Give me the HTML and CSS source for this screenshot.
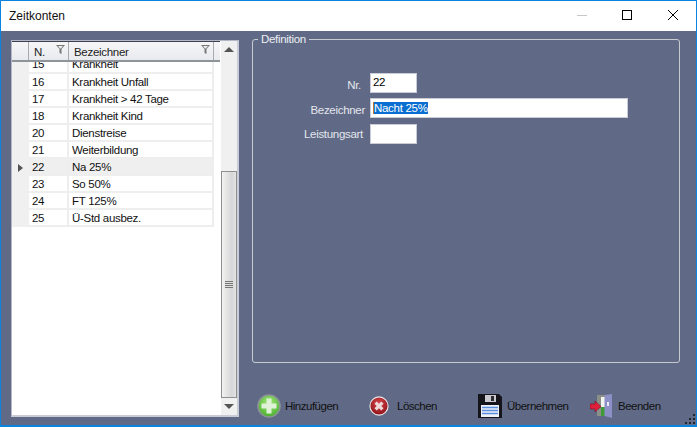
FILE: index.html
```html
<!DOCTYPE html>
<html lang="de">
<head>
<meta charset="utf-8">
<title>Zeitkonten</title>
<link rel="stylesheet" href="styles.css">
</head>
<body>
<div class="window">
  <header class="titlebar">
    <span class="title">Zeitkonten</span>
    <div class="controls">
      <svg class="ctl" width="46" height="30" viewBox="0 0 46 30"><path d="M19 14.500h10" stroke="#c8c8c8" fill="none"/></svg>
      <svg class="ctl" width="46" height="30" viewBox="0 0 46 30"><rect x="18.500" y="9.500" width="9" height="9" stroke="#000" fill="none"/></svg>
      <svg class="ctl" width="46" height="30" viewBox="0 0 46 30"><path d="M18 9l10 10M28 9l-10 10" stroke="#000" fill="none"/></svg>
    </div>
  </header>
  <div class="content">
    <section class="gridbox">
      <div class="grid">
        <div class="ghead">
          <div class="hc hc-ind"></div>
          <div class="hc hc-nr"><span>N.</span><svg class="filter" width="9" height="9" viewBox="0 0 9 9"><path d="M0 0h9L5.500 4v5L3.500 8V4z" fill="#777"/><path d="M2 1h5L4.800 3.500H4z" fill="#eee"/></svg></div>
          <div class="hc hc-name"><span>Bezeichner</span><svg class="filter" width="9" height="9" viewBox="0 0 9 9"><path d="M0 0h9L5.500 4v5L3.500 8V4z" fill="#777"/><path d="M2 1h5L4.800 3.500H4z" fill="#eee"/></svg></div>
        </div>
        <div class="gbody">
          <div class="row cut"><i></i><b>15</b><em>Krankheit</em></div>
          <div class="row"><i></i><b>16</b><em>Krankheit Unfall</em></div>
          <div class="row"><i></i><b>17</b><em>Krankheit &gt; 42 Tage</em></div>
          <div class="row"><i></i><b>18</b><em>Krankheit Kind</em></div>
          <div class="row"><i></i><b>20</b><em>Dienstreise</em></div>
          <div class="row"><i></i><b>21</b><em>Weiterbildung</em></div>
          <div class="row sel"><i><span class="arrow"></span></i><b>22</b><em>Na 25%</em></div>
          <div class="row"><i></i><b>23</b><em>So 50%</em></div>
          <div class="row"><i></i><b>24</b><em>FT 125%</em></div>
          <div class="row"><i></i><b>25</b><em>Ü-Std ausbez.</em></div>
        </div>
      </div>
      <div class="scroll">
        <div class="sbtn"><span class="up"></span></div>
        <div class="track">
          <div class="thumb"><span class="grip"></span></div>
        </div>
        <div class="sbtn"><span class="down"></span></div>
      </div>
    </section>
    <div class="right">
      <fieldset class="group">
        <legend>Definition</legend>
        <div class="form">
          <label class="flabel lb1">Nr.</label><div class="inp short">22</div>
          <label class="flabel lb2">Bezeichner</label><div class="inp long"><span class="hl">Nacht 25%</span></div>
          <label class="flabel lb3">Leistungsart</label><div class="inp short"></div>
        </div>
      </fieldset>
      <div class="actions">
        <div class="act a1">
          <svg width="24" height="24" viewBox="0 0 24 24"><defs><radialGradient id="g" cx="50%" cy="35%" r="65%"><stop offset="0" stop-color="#a5ea7c"/><stop offset="1" stop-color="#48ae2c"/></radialGradient></defs><circle cx="12" cy="12" r="11" fill="url(#g)" stroke="#8d9497" stroke-width="1.500"/><path d="M9.500 4.500h5v5h5v5h-5v5h-5v-5h-5v-5h5z" fill="#dff2d8"/></svg>
          <span>Hinzufügen</span>
        </div>
        <div class="act a2">
          <svg width="20" height="20" viewBox="0 0 22 22"><defs><radialGradient id="r" cx="50%" cy="35%" r="65%"><stop offset="0" stop-color="#d8454a"/><stop offset="1" stop-color="#8d1218"/></radialGradient></defs><circle cx="11" cy="11" r="10" fill="url(#r)" stroke="#e8e4e8" stroke-width="1.200"/><path d="M6 8.500L8.500 6 11 8.500 13.500 6 16 8.500 13.500 11 16 13.500 13.500 16 11 13.500 8.500 16 6 13.500 8.500 11z" fill="#eed8da"/></svg>
          <span>Löschen</span>
        </div>
        <div class="act a3">
          <svg width="24" height="24" viewBox="0 0 24 24"><path d="M0 0h21l3 3v21H0z" fill="#14141a"/><rect x="7" y="1" width="11" height="7" fill="#c9c9cf"/><rect x="13" y="2" width="3" height="5" fill="#2a2a30"/><rect x="3" y="11" width="18" height="12" fill="#eef1fa"/><path d="M4 13.500h16M4 16.500h16M4 19.500h16" stroke="#5b8fdc" stroke-width="1.500"/></svg>
          <span>Übernehmen</span>
        </div>
        <div class="act a4">
          <svg width="22" height="24" viewBox="0 0 22 24"><path d="M7 1h14v21H7z" fill="#8a8f88"/><path d="M11 3h4v10h-4z" fill="#f2f4f2"/><path d="M11 13h4v9h-4z" fill="#3f9a3a"/><path d="M14.500 1L22 0v24l-7.500-2z" fill="#8d90c6"/><path d="M17 8h2v4h-2z" fill="#e8e8f5"/><path d="M0 10h5V7l6 5.500L5 18v-3H0z" fill="#e01f3d" stroke="#7a1020" stroke-width=".6"/></svg>
          <span>Beenden</span>
        </div>
      </div>
    </div>
    <svg class="sizegrip" width="12" height="12" viewBox="0 0 12 12"><path d="M9 1h2v2H9zM5 5h2v2H5zM9 5h2v2H9zM1 9h2v2H1zM5 9h2v2H5zM9 9h2v2H9z" fill="#20242e"/></svg>
  </div>
</div>
</body>
</html>
```
FILE: styles.css
```css
* { box-sizing: border-box; }
html, body { margin: 0; padding: 0; }
body { width: 697px; height: 427px; overflow: hidden; font: 11.5px "Liberation Sans", Arial, sans-serif; letter-spacing: -0.3px; color: #000; }
.window { width: 697px; height: 427px; border: 1px solid #0a84e0; border-bottom-width: 2px; display: flex; flex-direction: column; background: #606a86; }
.titlebar { height: 30px; flex: none; background: #fff; display: flex; justify-content: space-between; padding-left: 8px; }
.title { font-size: 12px; letter-spacing: 0; color: #111; line-height: 30px; }
.controls { display: flex; }
.ctl { display: block; }
.content { flex: 1; display: flex; padding: 9px 0 0 10px; position: relative; min-height: 0; }
.gridbox { width: 228px; height: 377px; flex: none; background: #fff; border: 1px solid #b4b8c6; border-right: 2px solid #c9ccd6; border-bottom: 2px solid #c9ccd6; display: flex; }
.grid { width: 209px; flex: none; display: flex; flex-direction: column; }
.ghead { height: 21px; display: flex; background: linear-gradient(#f6f6f8, #e9eaee); border-top: 1px solid #3e4250; border-bottom: 2px solid #8f939a; flex: none; width: 208px; }
.hc { display: flex; justify-content: space-between; border-right: 1px solid #a9abb0; color: #222; }
.hc span { line-height: 20px; }
.hc-ind { width: 17px; }
.hc-nr { width: 40px; padding: 0 3px 0 5px; }
.hc-name { width: 145px; padding: 0 3px 0 5px; }
.filter { margin-top: 3px; }
.gbody { flex: 1; overflow: hidden; }
.row { height: 17px; display: flex; line-height: 17px; color: #111; }
.row.cut { height: 12px; line-height: 5px; overflow: hidden; }
.row i { width: 17px; flex: none; background: #f0f0f0; display: flex; align-items: center; padding-left: 6px; }
.row b, .row em { font-weight: normal; font-style: normal; padding-left: 3px; border-right: 2px solid #eee; border-bottom: 2px solid #eee; }
.row b { width: 40px; }
.row em { width: 145px; }
.row.sel b, .row.sel em { background: #efefef; }
.arrow { width: 0; height: 0; border-left: 5px solid #555; border-top: 4.500px solid transparent; border-bottom: 4.500px solid transparent; }
.scroll { width: 16px; flex: none; display: flex; flex-direction: column; background: #f0f0f0; }
.sbtn { height: 17px; flex: none; display: flex; align-items: center; justify-content: center; }
.up { width: 0; height: 0; border-left: 5px solid transparent; border-right: 5px solid transparent; border-bottom: 5px solid #555; }
.down { width: 0; height: 0; border-left: 5px solid transparent; border-right: 5px solid transparent; border-top: 5px solid #555; }
.track { flex: 1; display: flex; flex-direction: column; justify-content: flex-end; }
.thumb { height: 227px; border: 1px solid #8f8f8f; background: linear-gradient(90deg, #f2f2f2, #d6d6d8 70%, #e4e4e4); display: flex; align-items: center; justify-content: center; }
.grip { width: 8px; height: 7px; background: repeating-linear-gradient(#777 0 1px, #ddd 1px 2px); }
.right { flex: 1; margin-left: 13px; padding-right: 16px; display: flex; flex-direction: column; min-width: 0; }
.group { height: 331px; margin: -8px 0 0; padding: 0; border: 1px solid #c8cad2; border-radius: 3px; flex: none; }
legend { padding: 0 3px; margin-left: 5px; line-height: 14px; color: #eceef2; }
.form { display: grid; grid-template-columns: 117px auto; grid-template-rows: 25px 26px 20px; justify-content: start; justify-items: start; margin-top: 27px; }
.flabel { justify-self: end; align-self: start; color: #e4e6ec; line-height: 14px; }
.lb1 { padding: 5px 9px 0 0; }
.lb2 { padding: 5px 5px 0 0; }
.lb3 { padding: 3px 7px 0 0; }
.inp { height: 20px; background: #fff; border: 1px solid #c9ccd6; color: #000; padding: 0 0 0 2px; line-height: 17px; }
.short { width: 47px; }
.long { width: 258px; }
.hl { background: #0a6fd0; color: #fff; display: block; width: fit-content; margin-top: 3px; height: 12px; line-height: 12px; border-left: 1px solid #c87030; }
.actions { display: flex; height: 30px; margin-top: 28px; align-items: center; color: #111; letter-spacing: -0.5px; }
.act { display: flex; align-items: center; flex: none; }
.a1 { width: 112px; margin-left: 5px; gap: 4px; }
.a2 { width: 109px; gap: 8px; }
.a3 { width: 112px; gap: 5px; }
.a4 { gap: 6px; }
.sizegrip { position: absolute; right: 0; bottom: 0; }
```
